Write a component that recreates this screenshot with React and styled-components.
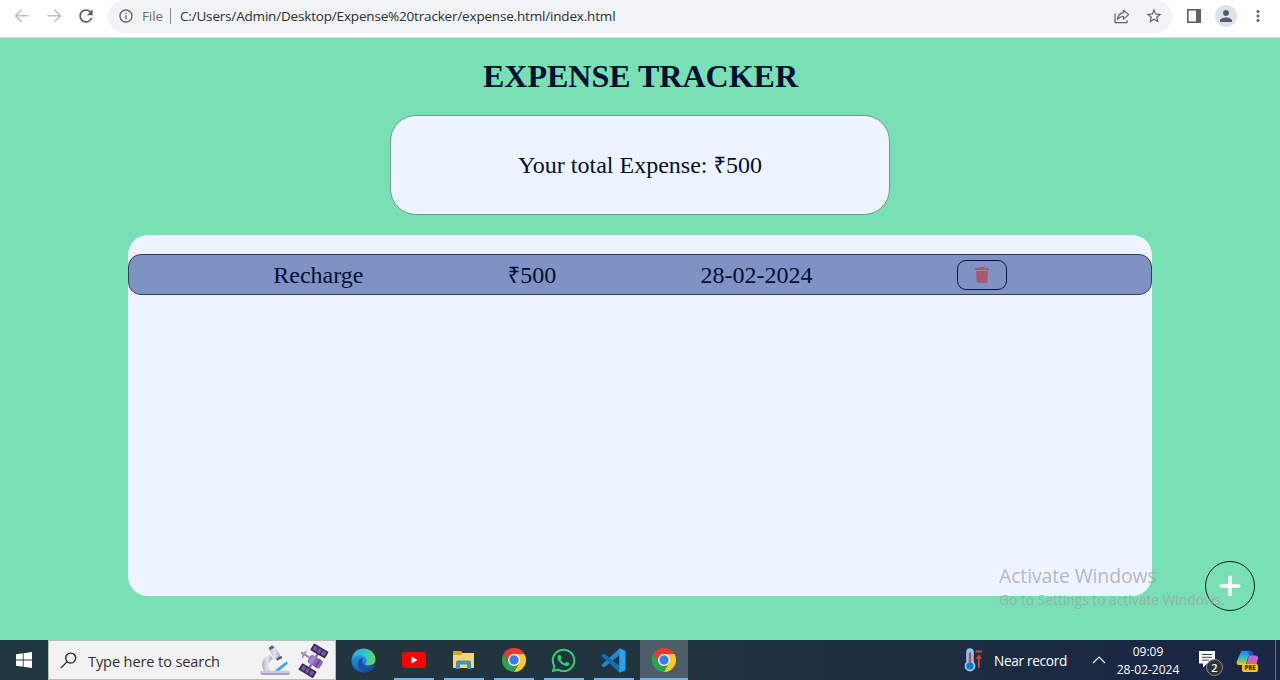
import React from 'react';
import styled, { createGlobalStyle } from 'styled-components';
import { MdRefresh, MdInfoOutline, MdStarOutline, MdMoreVert, MdPerson } from 'react-icons/md';
import { FaTrash, FaWhatsapp } from 'react-icons/fa';

const GlobalStyle = createGlobalStyle`
  * { box-sizing: border-box; }
  html, body { margin: 0; padding: 0; }
  body { overflow: hidden; }
  svg { display: block; flex: none; }
`;

const ui = '"Open Sans", "Noto Sans", sans-serif';

const Screen = styled.div`
  position: relative;
  display: flex;
  flex-direction: column;
  width: 1280px;
  height: 680px;
  overflow: hidden;
`;

/* ---------- browser toolbar ---------- */

const BrowserBar = styled.header`
  display: flex;
  align-items: flex-start;
  height: 38px;
  background: #fff;
  border-bottom: 1px solid #cfe3da;
  font-family: ${ui};
`;

const NavButtons = styled.div`
  display: flex;
  align-items: center;
  gap: 12px;
  height: 32px;
  padding-left: 12px;
  width: 108px;
  color: #5b5e62;
`;

const AddressBar = styled.div`
  display: flex;
  align-items: center;
  width: 1064px;
  height: 33px;
  padding: 0 9px 1px 10px;
  border-radius: 17px;
  background: #f1f3f4;
  color: #5f6368;
`;

const Scheme = styled.span`
  width: 22px;
  margin-left: 8px;
  font-size: 13.5px;
  line-height: 20px;
  letter-spacing: -0.1px;
  color: #6b6f74;
`;

const Divider = styled.span`
  width: 1px;
  height: 16px;
  margin: 0 9px 0 6px;
  background: #85898d;
`;

const Url = styled.span`
  flex: 1;
  font-size: 13.5px;
  line-height: 20px;
  letter-spacing: -0.18px;
  white-space: nowrap;
  color: #2b2e33;
`;

const AddressActions = styled.div`
  display: flex;
  align-items: center;
  gap: 14px;
`;

const BrowserActions = styled.div`
  display: flex;
  align-items: center;
  height: 32px;
  padding-left: 15px;
  gap: 14px;
  color: #5f6368;
`;

const Avatar = styled.span`
  display: flex;
  align-items: center;
  justify-content: center;
  width: 22px;
  height: 22px;
  margin-right: -2px;
  border-radius: 50%;
  background: #dde1e8;
  color: #505b72;
`;

/* ---------- expense tracker page ---------- */

const Page = styled.main`
  position: relative;
  display: flex;
  flex-direction: column;
  align-items: center;
  height: 602px;
  background: #79dfb4;
  color: #000f33;
  font-family: "Liberation Serif", "Times New Roman", serif;
`;

const Title = styled.h1`
  margin: 20px 0;
  padding-left: 1px;
  font-size: 32px;
  line-height: 37px;
  font-weight: 700;
`;

const TotalCard = styled.section`
  display: flex;
  align-items: center;
  justify-content: center;
  width: 500px;
  height: 100px;
  margin-bottom: 20px;
  border: 1px solid #75998f;
  border-radius: 26px;
  background: #eef4ff;
  font-size: 24px;
  line-height: 28px;
`;

const Rupee = styled.span`
  font-family: "Noto Sans", "DejaVu Sans", sans-serif;
  font-size: 22px;
  line-height: 0;
`;

const ExpenseList = styled.section`
  width: 1024px;
  height: 361px;
  padding-top: 19px;
  border-radius: 20px;
  background: #eef4ff;
`;

const ExpenseRow = styled.div`
  display: flex;
  align-items: center;
  justify-content: space-evenly;
  height: 41px;
  border: 1px solid #373d4e;
  border-radius: 13px;
  background: #7e93c4;
  font-size: 24px;
  line-height: 28px;
`;

const DeleteButton = styled.button`
  display: flex;
  align-items: center;
  justify-content: center;
  width: 50px;
  height: 30px;
  padding: 0;
  border: 1px solid #061740;
  border-radius: 9px;
  background: transparent;
  color: #a95872;
`;

const AddButton = styled.button`
  position: absolute;
  right: 25px;
  bottom: 29px;
  display: flex;
  align-items: center;
  justify-content: center;
  width: 50px;
  height: 50px;
  padding: 0;
  border: 1px solid #0b2018;
  border-radius: 50%;
  background: transparent;
`;

const Watermark = styled.div`
  position: absolute;
  left: 999px;
  top: 562px;
  color: rgba(160, 160, 165, 0.72);
  font-family: ${ui};
  white-space: nowrap;
`;

const WatermarkTitle = styled.div`
  font-size: 19.5px;
  line-height: 28px;
  letter-spacing: -0.15px;
`;

const WatermarkText = styled.div`
  font-size: 14px;
  line-height: 20px;
  letter-spacing: -0.1px;
`;

/* ---------- taskbar ---------- */

const Taskbar = styled.footer`
  display: flex;
  height: 40px;
  background: linear-gradient(90deg, #21373f 0%, #20343f 50%, #1c2f40 72%, #1a2843 88%, #1a2745 100%);
  color: #fff;
  font-family: ${ui};
`;

const StartButton = styled.div`
  display: flex;
  align-items: center;
  justify-content: center;
  width: 48px;
`;

const SearchBox = styled.div`
  display: flex;
  align-items: center;
  width: 288px;
  padding-left: 11px;
  border: 1px solid #b9bbbc;
  background: #f2f2f2;
  color: #303030;
`;

const SearchText = styled.span`
  width: 171px;
  margin: 1px 0 0 11px;
  font-size: 14.6px;
  letter-spacing: -0.13px;
  white-space: nowrap;
`;

const Apps = styled.div`
  display: flex;
  gap: 2px;
  padding-left: 3.5px;
`;

const AppSlot = styled.div`
  position: relative;
  display: flex;
  align-items: center;
  justify-content: center;
  width: 48px;
  height: 40px;
  background: ${(p) => (p.$active ? '#4c5d67' : 'transparent')};

  &::after {
    content: '';
    position: absolute;
    bottom: 0;
    left: ${(p) => (p.$active ? 0 : 4)}px;
    right: ${(p) => (p.$active ? 0 : 4)}px;
    height: 2px;
    background: ${(p) => (p.$running ? '#76b4e6' : 'transparent')};
  }
`;

const Tray = styled.div`
  display: flex;
  align-items: center;
  flex: 1;
  padding-left: 276.5px;
`;

const Weather = styled.span`
  width: 98px;
  margin: 1px 0 0 10px;
  font-size: 13.6px;
  letter-spacing: -0.3px;
  white-space: nowrap;
`;

const Clock = styled.div`
  width: 66px;
  margin: 1px 18px 0 9px;
  text-align: center;
  font-size: 12px;
  line-height: 18px;
  letter-spacing: 0;
  white-space: nowrap;
`;

const Notifications = styled.div`
  position: relative;
  width: 24px;
  height: 26px;
  padding-top: 4px;
`;

const Badge = styled.span`
  position: absolute;
  left: 7px;
  top: 12px;
  width: 17px;
  height: 17px;
  border: 1px solid #8a8d93;
  border-radius: 50%;
  background: #303236;
  text-align: center;
  font-size: 11px;
  line-height: 15px;
  font-weight: 600;
`;

const Copilot = styled.div`
  position: relative;
  margin: 2px 0 0 13px;
`;

const PreviewTag = styled.span`
  position: absolute;
  left: 6px;
  bottom: 0;
  width: 16px;
  height: 8px;
  border-radius: 2px;
  background: #fcc413;
  color: #332600;
  text-align: center;
  font-size: 6px;
  line-height: 8px;
  font-weight: 800;
`;

const ShowDesktop = styled.div`
  width: 5px;
  height: 40px;
  margin-left: auto;
  border-left: 1px solid #67718a;
`;

const Arrow = ({ flip }) => (
  <svg width="20" height="20" viewBox="0 0 20 20" fill="none" stroke="#bcbec0" strokeWidth="1.5">
    <path d={flip ? 'M3.5 9.7H16M10.4 3.7l6 6-6 6' : 'M16.5 9.7H4M9.6 3.7l-6 6 6 6'} />
  </svg>
);

const ShareIcon = () => (
  <svg width="18" height="18" viewBox="0 0 18 18" fill="none" stroke="#5f6368" strokeWidth="1.2" strokeLinejoin="round">
    <path d="M2 6.5v9.1h12v-2.4" />
    <path d="M10.5 3.1l5.2 4.5-5.2 4.5V9.5c-3.2 0-4.8 1-6.1 2.9.4-3.9 2.2-6.2 6.1-6.8z" />
  </svg>
);

const SidePanelIcon = () => (
  <svg width="14" height="14" viewBox="0 0 14 14">
    <rect width="14" height="14" fill="#5f6368" />
    <rect x="1.6" y="1.6" width="7.4" height="10.8" fill="#fff" />
  </svg>
);

const PlusIcon = () => (
  <svg width="22" height="22" viewBox="0 0 22 22" fill="none" stroke="#fff" strokeWidth="3.5" strokeLinecap="round">
    <path d="M11 2.2v17.6M2.2 11h17.6" />
  </svg>
);

const WindowsLogo = () => (
  <svg width="16" height="16" viewBox="0 0 16 16" fill="#fff">
    <path d="M0 2.3l6.8-1v6.3H0zM7.6 1.2L16 0v7.6H7.6zM0 8.4h6.8v6.3l-6.8-1zM7.6 8.4H16V16l-8.4-1.2z" />
  </svg>
);

const SearchIcon = () => (
  <svg width="17" height="17" viewBox="0 0 17 17" fill="none" stroke="#202020" strokeWidth="1.3">
    <circle cx="10.7" cy="6.1" r="5" />
    <path d="M7.2 9.6L.7 16.1" />
  </svg>
);

const Microscope = () => (
  <svg width="32" height="34" viewBox="0 0 32 34">
    <defs>
      <linearGradient id="scope" x1="0" x2="1">
        <stop offset="0" stopColor="#b5adc7" />
        <stop offset=".5" stopColor="#e6e2ee" />
        <stop offset="1" stopColor="#a297b4" />
      </linearGradient>
    </defs>
    <path d="M11 12C2 14 1 24 6 29h7c-5-3-5-10 1-13z" fill="url(#scope)" />
    <path d="M9.5 5.4l6.5-2.2 6.2 11-6.4 3.4z" fill="url(#scope)" />
    <path d="M9.7 4.4l3.6-2.1 2.2 2.5-4.8 2.2z" fill="#655e70" />
    <path d="M17 15.5l5.5-2.6.7 2-4.9 2.9z" fill="#5d5370" />
    <path d="M15.5 27.6l12.2-9.4 1.2 2.6L20 28z" fill="#45a6e5" />
    <rect x="1" y="27.8" width="30" height="4" rx="2" fill="#cfc8da" />
    <path d="M1.5 30.2h29l-1 1.5H3z" fill="#9c92ac" />
  </svg>
);

const SatelliteSlot = styled.div`
  margin-left: 7px;
`;

const Satellite = () => (
  <svg width="32" height="35" viewBox="0 0 32 35">
    <g transform="translate(14.5 17.5) rotate(31)">
      <path d="M-.2-9h2.4v19H-.2z" fill="#8a6bb1" />
      <rect x="-4" y="-4.8" width="14" height="9" rx="2" fill="#8b67b7" />
      <rect x="-2.5" y="-4.8" width="4" height="9" fill="#a988d3" />
      <rect x="5" y="-4.8" width="2" height="9" fill="#6b478f" />
      <rect x="-7.5" y="-15.5" width="17" height="7.6" rx="1" fill="#382c4b" />
      <rect x="-7.5" y="7.5" width="17" height="7.6" rx="1" fill="#382c4b" />
      <path d="M-5.7-13.9h3.8v4.4h-3.8zM-.9-13.9h3.8v4.4H-.9zM3.9-13.9h3.8v4.4H3.9zM-5.7 9.1h3.8v4.4h-3.8zM-.9 9.1h3.8v4.4H-.9zM3.9 9.1h3.8v4.4H3.9z" fill="#7655ad" />
      <path d="M-4-1h-10" stroke="#9d83b9" strokeWidth="2" />
      <path d="M-9.5-6q-5 5 0 10z" fill="#a58fc3" />
    </g>
  </svg>
);

const Edge = () => (
  <svg width="25" height="25" viewBox="0 0 25 25">
    <defs>
      <linearGradient id="edgeTop" x1="0" y1=".5" x2="1" y2=".5">
        <stop offset="0" stopColor="#2ca7df" />
        <stop offset=".55" stopColor="#36c4ca" />
        <stop offset="1" stopColor="#68d957" />
      </linearGradient>
      <linearGradient id="edgeBody" x1="0" y1="0" x2="0" y2="1">
        <stop offset="0" stopColor="#209be3" />
        <stop offset="1" stopColor="#1260b5" />
      </linearGradient>
    </defs>
    <path d="M.6 11.5C5 5 14 6 15.3 11c.6 2.2-1 3.6-.6 5 1.3 3.7 7.8 1.7 9.1 1.3C21.3 23 15 25.5 9.5 24 4 22.6-.2 18 .6 11.5z" fill="url(#edgeBody)" />
    <path d="M8.8 11c-4 5.2-1 12.3 5 13.2 5 .4 8.8-3.2 10-6.9-4 2.6-11.7 1.8-12.8-3.5-.3-1.4.5-2.5 1.4-3.2-1.2-.6-2.4-.5-3.6.4z" fill="#124f9e" />
    <path d="M.6 11.5C1.7 3.8 7 .5 12.5.5c7 0 12 5.4 12 10.8 0 4.4-3.3 6.2-6.5 6.2-2.7 0-4.3-1.2-3.2-2.8 1.2-1.8.8-4.4-1.4-5.8C9.5 6.4 3.5 7.7.6 11.5z" fill="url(#edgeTop)" />
  </svg>
);

const YouTube = () => (
  <svg width="24" height="16" viewBox="0 0 24 16">
    <rect width="24" height="16" rx="3" fill="#fe0000" />
    <path d="M9.5 4.6l6 3.4-6 3.4z" fill="#fff" />
  </svg>
);

const Explorer = () => (
  <svg width="21" height="19" viewBox="0 0 21 19">
    <path d="M0 1.2Q0 0 1 0h7l1.5 2H21v15H0z" fill="#dfa126" />
    <path d="M0 4h8l1.5-2H21v15H0z" fill="#fbd66e" />
    <path d="M3 18v-6.5Q3 9.5 5 9.5h11q2 0 2 2V18h-4v-4.5H7V18z" fill="#3d92cd" />
  </svg>
);

const Chrome = () => (
  <svg width="24" height="24" viewBox="0 0 24 24">
    <path d="M1.6 6A12 12 0 0 1 22.4 6L12 12z" fill="#e33b2e" />
    <path d="M22.4 6A12 12 0 0 1 12 24l5-9.2L17.2 9 12 6z" fill="#fcca24" />
    <path d="M1.6 6A12 12 0 0 0 12 24l5.2-9L12 17.4 6.8 15z" fill="#2ba24c" />
    <path d="M1.6 6l5.2 9L12 6h10.4A12 12 0 0 0 1.6 6z" fill="#e33b2e" />
    <circle cx="12" cy="12" r="6" fill="#fff" />
    <circle cx="12" cy="12" r="4.7" fill="#377cf0" />
  </svg>
);

const VSCode = () => (
  <svg width="25" height="25" viewBox="0 0 25 25">
    <path d="M18.3.6L1 16.4q-.8.8 0 1.6l1.1 1q.7.5 1.5 0L19 6.7z" fill="#2489ca" />
    <path d="M18.3 24.4L1 8.6Q.2 7.8 1 7l1.1-1q.7-.5 1.5 0L19 18.3z" fill="#1070b3" />
    <path d="M18.3.5q.5-.2 1 0l4.4 2q.8.4.8 1.3v17.4q0 .9-.8 1.3l-4.4 2q-.6.2-1 0z" fill="#25a5ee" />
  </svg>
);

const Thermometer = () => (
  <svg width="20" height="24" viewBox="0 0 20 24">
    <path d="M2.2 4a3.8 3.8 0 0 1 7.6 0v10a5.5 5.5 0 1 1-7.6 0z" fill="#8ec5ef" />
    <path d="M4.8 5q1.2-2 2.4 0v12H4.8z" fill="#dd3d55" />
    <circle cx="6" cy="18" r="3.6" fill="#1877c5" />
    <path d="M11.7 2.5h6.2v2h-6.2zM14.8 6.6l3.3 4.2h-2.3v9h-2v-9h-2.3z" fill="#e43b30" />
  </svg>
);

const Chevron = () => (
  <svg width="14" height="8" viewBox="0 0 14 8" fill="none" stroke="#f5f6f8" strokeWidth="1.1">
    <path d="M1 7l6-6 6 6" />
  </svg>
);

const Message = () => (
  <svg width="16" height="17" viewBox="0 0 16 17">
    <path d="M0 0h16v12.5H8L4 16.5v-4H0z" fill="#fff" />
    <path d="M3 3.5h10M3 6.3h10M3 9.1h7" stroke="#344157" />
  </svg>
);

const CopilotIcon = () => (
  <svg width="23" height="22" viewBox="0 0 23 22">
    <defs>
      <linearGradient id="copLeft" x1=".5" y1="0" x2=".3" y2="1">
        <stop offset="0" stopColor="#2778e0" />
        <stop offset=".45" stopColor="#27b6d4" />
        <stop offset=".75" stopColor="#8bc34d" />
        <stop offset="1" stopColor="#edc831" />
      </linearGradient>
      <linearGradient id="copRight" x1=".5" y1="0" x2=".4" y2="1">
        <stop offset="0" stopColor="#ad68e9" />
        <stop offset=".5" stopColor="#e15ba9" />
        <stop offset="1" stopColor="#f58542" />
      </linearGradient>
    </defs>
    <path d="M5 1.5Q5.5.7 7 .7h7q2 0 2.7 2l.8 2.7h-3q-1.8 0-2.4 2L9.7 15H3.2Q0 15 .8 11.5z" fill="url(#copLeft)" />
    <path d="M12 .7h2.2q1.8 0 2.5 2l.8 2.7h-4z" fill="#204ec8" />
    <path d="M14.5 5.4h4.8q3.4 0 2.6 3.6l-2.2 8q-.6 2.5-3 2.5H9q-2 0-2.5-2L6 15h3l1.5-1 2-6.7q.5-1.9 2-1.9z" fill="url(#copRight)" />
  </svg>
);

const expenses = [{ name: 'Recharge', amount: 500, date: '28-02-2024' }];
const total = expenses.reduce((sum, e) => sum + e.amount, 0);

const apps = [
  { id: 'edge', icon: <Edge /> },
  { id: 'youtube', icon: <YouTube />, running: true },
  { id: 'explorer', icon: <Explorer />, running: true },
  { id: 'chrome', icon: <Chrome />, running: true },
  { id: 'whatsapp', icon: <FaWhatsapp size={27} color="#2fd46c" />, running: true },
  { id: 'vscode', icon: <VSCode />, running: true },
  { id: 'chrome-active', icon: <Chrome />, running: true, active: true },
];

export default function App() {
  return (
    <Screen>
      <GlobalStyle />
      <BrowserBar>
        <NavButtons>
          <Arrow />
          <Arrow flip />
          <MdRefresh size={20} />
        </NavButtons>
        <AddressBar>
          <MdInfoOutline size={16} />
          <Scheme>File</Scheme>
          <Divider />
          <Url>C:/Users/Admin/Desktop/Expense%20tracker/expense.html/index.html</Url>
          <AddressActions>
            <ShareIcon />
            <MdStarOutline size={18} />
          </AddressActions>
        </AddressBar>
        <BrowserActions>
          <SidePanelIcon />
          <Avatar>
            <MdPerson size={18} />
          </Avatar>
          <MdMoreVert size={18} />
        </BrowserActions>
      </BrowserBar>

      <Page>
        <Title>EXPENSE TRACKER</Title>
        <TotalCard>
          <span>
            Your total Expense: <Rupee>₹</Rupee>
            {total}
          </span>
        </TotalCard>
        <ExpenseList>
          {expenses.map((e) => (
            <ExpenseRow key={e.name}>
              <span>{e.name}</span>
              <span>
                <Rupee>₹</Rupee>
                {e.amount}
              </span>
              <span>{e.date}</span>
              <DeleteButton aria-label="Delete">
                <FaTrash size={16} />
              </DeleteButton>
            </ExpenseRow>
          ))}
        </ExpenseList>
        <AddButton aria-label="Add expense">
          <PlusIcon />
        </AddButton>
      </Page>

      <Taskbar>
        <StartButton>
          <WindowsLogo />
        </StartButton>
        <SearchBox>
          <SearchIcon />
          <SearchText>Type here to search</SearchText>
          <Microscope />
          <SatelliteSlot>
            <Satellite />
          </SatelliteSlot>
        </SearchBox>
        <Apps>
          {apps.map((app) => (
            <AppSlot key={app.id} $running={app.running} $active={app.active}>
              {app.icon}
            </AppSlot>
          ))}
        </Apps>
        <Tray>
          <Thermometer />
          <Weather>Near record</Weather>
          <Chevron />
          <Clock>
            <div>09:09</div>
            <div>28-02-2024</div>
          </Clock>
          <Notifications>
            <Message />
            <Badge>2</Badge>
          </Notifications>
          <Copilot>
            <CopilotIcon />
            <PreviewTag>PRE</PreviewTag>
          </Copilot>
          <ShowDesktop />
        </Tray>
      </Taskbar>

      <Watermark>
        <WatermarkTitle>Activate Windows</WatermarkTitle>
        <WatermarkText>Go to Settings to activate Windows.</WatermarkText>
      </Watermark>
    </Screen>
  );
}
